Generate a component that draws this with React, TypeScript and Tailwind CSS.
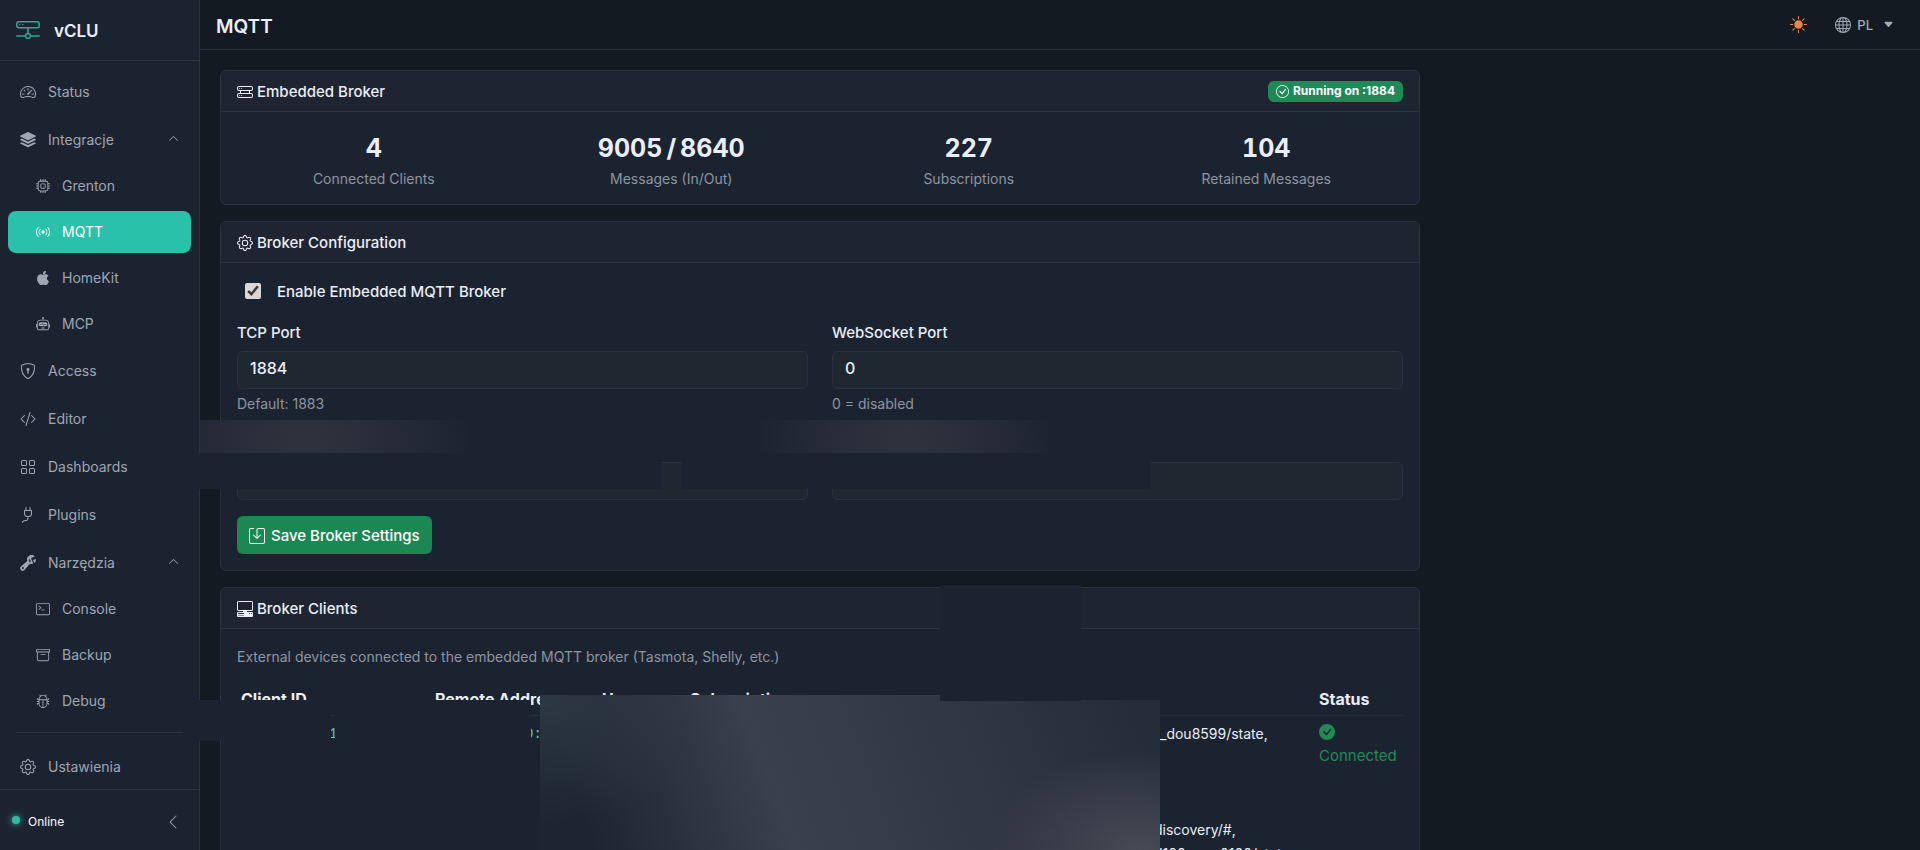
import React from 'react';
import {
    BsApple, BsArchive, BsBroadcast, BsBug, BsCaretDownFill, BsCheckCircle, BsCheckCircleFill, BsChevronLeft, BsChevronUp,
    BsCodeSlash, BsCpu, BsGear, BsGlobe, BsGrid, BsHddNetwork, BsHddRack, BsPcDisplayHorizontal,
    BsPlug, BsRobot, BsSave, BsShieldLock, BsSpeedometer2, BsStack, BsSunFill, BsTerminal, BsWrenchAdjustable,
} from 'react-icons/bs';

const TopLink: React.FC<{ icon: React.ReactNode; label: string }> = ({ icon, label }) => (
    <a href="#" className="h-11 px-3 flex items-center gap-3 rounded-lg text-sm">
        <span className="text-base">{icon}</span>
        {label}
    </a>
);

const SubLink: React.FC<{ icon: React.ReactNode; label: string; active?: boolean }> = ({ icon, label, active }) => (
    <a
        href="#"
        className={`h-[42px] pl-7 flex items-center gap-3 rounded-lg text-sm ${active ? 'bg-[#29c1a9] text-white' : ''}`}
    >
        {icon}
        {label}
    </a>
);

const GroupButton: React.FC<{ icon: React.ReactNode; label: string }> = ({ icon, label }) => (
    <button className="h-11 px-3 w-full flex items-center gap-3 rounded-lg text-sm">
        <span className="text-base">{icon}</span>
        <span className="flex-1 text-left">{label}</span>
        <BsChevronUp className="mb-1 text-[11px]" />
    </button>
);

const Card: React.FC<{ icon: React.ReactNode; title: string; badge?: React.ReactNode; children: React.ReactNode }> = ({ icon, title, badge, children }) => (
    <section className="border border-[#2b333f] rounded-md bg-[#1c2330]">
        <div className="h-[41px] px-4 flex items-center justify-between border-b border-[#2b333f] bg-[#1e2531] rounded-t-md">
            <h2 className="pt-0.5 flex items-center gap-1 font-medium">
                <span className="text-base">{icon}</span>
                {title}
            </h2>
            {badge}
        </div>
        <div className="p-4">{children}</div>
    </section>
);

const inputClass = 'block w-full h-[38px] px-3 pb-1 rounded-md border border-[#29333d] bg-[#1f2831] text-base';

const Field: React.FC<{ id: string; label: string; value: string; hint: string }> = ({ id, label, value, hint }) => (
    <div>
        <label htmlFor={id} className="block pt-0.5 mb-1.5 leading-6">{label}</label>
        <input id={id} defaultValue={value} className={inputClass} />
        <p className="mt-[5px] text-sm leading-5 font-normal text-[#8d95a1]">{hint}</p>
    </div>
);

const stats = [
    { value: ['4'], label: 'Connected Clients' },
    { value: ['9005', '/', '8640'], label: 'Messages (In/Out)' },
    { value: ['227'], label: 'Subscriptions' },
    { value: ['104'], label: 'Retained Messages' },
];

const App: React.FC = () => {
    return (
        <div className="h-screen flex overflow-hidden bg-[#141a21] text-[#e9eef8] font-['Inter',sans-serif]">
            <aside className="w-[200px] shrink-0 flex flex-col bg-[#1c2330] border-r border-[#2b333f] text-[#9ea6b3]">
                <div className="h-[61px] shrink-0 px-4 flex items-center gap-3.5 border-b border-[#2b333f]">
                    <BsHddNetwork className="text-2xl text-[#35a693]" />
                    <span className="pt-1 text-[17px] font-semibold text-[#e9eef8]">vCLU</span>
                </div>

                <nav className="flex-1 min-h-0 px-2 pt-[9px] flex flex-col gap-1 overflow-hidden">
                    <TopLink icon={<BsSpeedometer2 />} label="Status" />
                    <div>
                        <GroupButton icon={<BsStack />} label="Integracje" />
                        <div className="mt-[3px] flex flex-col gap-1">
                            <SubLink icon={<BsCpu />} label="Grenton" />
                            <SubLink icon={<BsBroadcast />} label="MQTT" active />
                            <SubLink icon={<BsApple />} label="HomeKit" />
                            <SubLink icon={<BsRobot />} label="MCP" />
                        </div>
                    </div>
                    <TopLink icon={<BsShieldLock />} label="Access" />
                    <TopLink icon={<BsCodeSlash />} label="Editor" />
                    <TopLink icon={<BsGrid />} label="Dashboards" />
                    <TopLink icon={<BsPlug />} label="Plugins" />
                    <div>
                        <GroupButton icon={<BsWrenchAdjustable />} label="Narzędzia" />
                        <div className="mt-[3px] flex flex-col gap-1">
                            <SubLink icon={<BsTerminal />} label="Console" />
                            <SubLink icon={<BsArchive />} label="Backup" />
                            <SubLink icon={<BsBug />} label="Debug" />
                        </div>
                    </div>
                    <hr className="mx-2 mt-1.5 mb-2 border-[#2b333f]" />
                    <TopLink icon={<BsGear />} label="Ustawienia" />
                </nav>

                <div className="h-[61px] shrink-0 px-3 pt-1 flex items-center gap-2 border-t border-[#2b333f] text-xs text-white">
                    <span className="size-2 mb-1 rounded-full bg-[#35b89f] shadow-[0_0_6px_#29c1a9]" />
                    <span className="flex-1">Online</span>
                    <button aria-label="Zwiń menu" className="px-1.5 text-[#9ea6b3]">
                        <BsChevronLeft className="text-base" />
                    </button>
                </div>
            </aside>

            <div className="flex-1 min-w-0 flex flex-col relative">
                <header className="h-[50px] shrink-0 px-4 flex items-center border-b border-[#2b333f]">
                    <h1 className="flex-1 pt-1.5 text-[19px] font-semibold">MQTT</h1>
                    <button aria-label="Motyw" className="mr-7 text-[#f0824f]">
                        <BsSunFill className="text-[17px]" />
                    </button>
                    <button className="mr-2.5 flex items-center gap-1.5 text-[13px] font-medium text-[#a3abb8]">
                        <BsGlobe className="text-base" />
                        <span className="pt-0.5">PL</span>
                        <BsCaretDownFill className="ml-1 text-[11px]" />
                    </button>
                </header>

                <main className="flex-1 min-h-0 overflow-hidden p-5">
                    <div className="max-w-[1200px] flex flex-col gap-4 text-[15px]">
                        <Card
                            icon={<BsHddRack />}
                            title="Embedded Broker"
                            badge={
                                <span className="h-[21px] px-2 flex items-center gap-1 rounded-md bg-[#1f8a57] text-xs font-bold text-white">
                                    <BsCheckCircle className="text-[13px]" />
                                    Running on :1884
                                </span>
                            }
                        >
                            <div className="grid grid-cols-4 gap-6 text-center">
                                {stats.map(s => (
                                    <div key={s.label}>
                                        <p className="mt-1 flex justify-center gap-1 text-[25px] leading-8 font-bold tabular-nums">
                                            {s.value.map(v => <span key={v}>{v}</span>)}
                                        </p>
                                        <p className="mt-[5px] text-sm leading-[19px] text-[#8d95a1]">{s.label}</p>
                                    </div>
                                ))}
                            </div>
                        </Card>

                        <Card icon={<BsGear />} title="Broker Configuration">
                            <label className="h-6 mb-4 pl-2 flex items-center gap-4 font-medium">
                                <input type="checkbox" defaultChecked className="size-4 accent-[#d9d9d9]" />
                                <span className="pt-0.5">Enable Embedded MQTT Broker</span>
                            </label>
                            <div className="grid grid-cols-2 gap-x-6 gap-y-4 font-medium">
                                <Field id="tcp" label="TCP Port" value="1884" hint="Default: 1883" />
                                <Field id="ws" label="WebSocket Port" value="0" hint="0 = disabled" />
                                <div className="pt-8">
                                    <input aria-label="Username" className={inputClass} />
                                </div>
                                <div className="pt-8">
                                    <input aria-label="Password" type="password" className={inputClass} />
                                </div>
                            </div>
                            <button className="mt-4 h-[38px] px-3 pt-0.5 flex items-center gap-1.5 rounded-md bg-[#1b8853] font-medium text-white">
                                <BsSave className="text-base" />
                                Save Broker Settings
                            </button>
                        </Card>

                        <Card icon={<BsPcDisplayHorizontal />} title="Broker Clients">
                            <p className="mb-4 pt-0.5 text-sm leading-5 text-[#8d95a1]">
                                External devices connected to the embedded MQTT broker (Tasmota, Shelly, etc.)
                            </p>
                            <table className="w-full table-fixed text-left leading-6">
                                <thead>
                                    <tr className="h-8 border-b border-[#272e3a] text-base whitespace-nowrap">
                                        <th className="w-[194px] px-1 font-bold">Client ID</th>
                                        <th className="w-[167px] px-1 font-bold">Remote Address</th>
                                        <th className="w-[88px] px-1 font-bold">User</th>
                                        <th className="px-1 font-bold">Subscriptions</th>
                                        <th className="w-[88px] px-1 font-bold">Status</th>
                                    </tr>
                                </thead>
                                <tbody>
                                    <tr className="align-top">
                                        <td className="py-1 pl-[92px] font-['Liberation_Mono',monospace] text-sm leading-7 text-[#5fc9b8]">1</td>
                                        <td className="py-1 pl-[94px] font-['Liberation_Mono',monospace] text-sm leading-7 text-[#5fc9b8]">0:</td>
                                        <td />
                                        <td className="py-1.5 pl-[468px] text-sm leading-6 whitespace-nowrap">
                                            <p className="pl-1.5">_dou8599/state,</p>
                                            <p className="pt-[72px]">discovery/#,</p>
                                            <p>d100_pro_0100/state</p>
                                        </td>
                                        <td className="px-1 py-1 text-[#1f8a57]">
                                            <BsCheckCircleFill className="my-1 text-base" />
                                            Connected
                                        </td>
                                    </tr>
                                </tbody>
                            </table>
                        </Card>
                    </div>
                </main>

                {/* masks over the private values */}
                <div className="absolute left-0 top-[420px] w-[270px] h-[33px] bg-[radial-gradient(ellipse_170px_120px_at_105px_22px,#2d323d_10%,#282d39_40%,#1c2330_100%)]" />
                <div className="absolute left-[560px] top-[420px] w-[300px] h-[33px] bg-[radial-gradient(ellipse_150px_120px_at_147px_22px,#2d323d_10%,#282d39_45%,#1c2330_100%)]" />
                <div className="absolute -left-0.5 top-[453px] w-[463px] h-9 bg-[#1c2330]" />
                <div className="absolute left-[482px] top-[453px] w-[469px] h-9 bg-[#1c2330]" />
                <div className="absolute -left-0.5 top-[700px] w-[133px] h-[41px] bg-[#1c2330]" />
                <div className="absolute left-[135px] top-[700px] w-[196px] h-[41px] bg-[#1c2330]" />
                <div className="absolute left-[340px] top-[695px] w-[620px] bottom-0 bg-[radial-gradient(ellipse_150px_100px_at_600px_155px,#464b55_0%,transparent_100%),radial-gradient(ellipse_180px_130px_at_0px_0px,#2d3842_0%,transparent_100%),linear-gradient(70deg,#1c2531_8%,#3b414c_38%,#343a45_60%,#262d3a_95%)]" />
                <div className="absolute left-[740px] top-[585px] w-[141px] h-[116px] bg-[#1c2330]" />
                <div className="absolute left-[881px] top-[690px] w-20 h-2.5 bg-[#1c2330]" />
            </div>
        </div>
    );
};

export default App;
